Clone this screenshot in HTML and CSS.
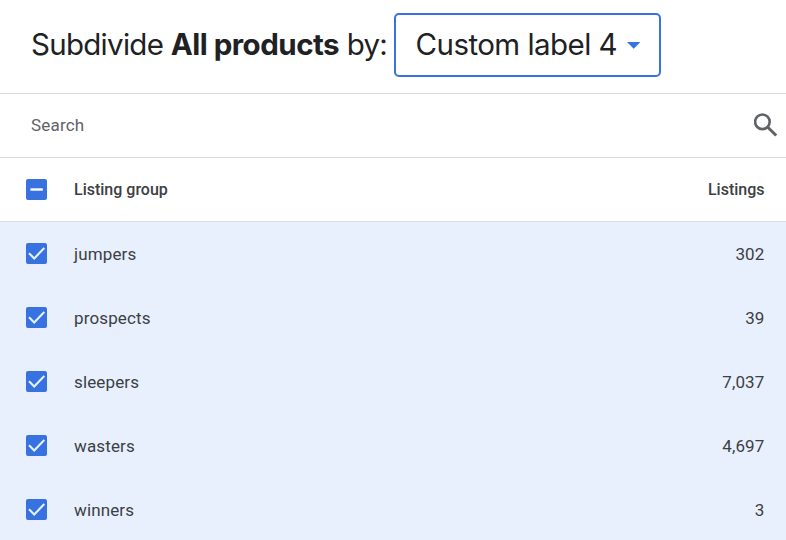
FILE: index.html
```html
<!DOCTYPE html>
<html lang="en">
<head>
  <meta charset="UTF-8">
  <meta name="viewport" content="width=device-width, initial-scale=1.0">
  <title>Subdivide products</title>
  <link rel="stylesheet" href="styles.css">
</head>
<body>
  <div class="header">
    <div class="title">Subdivide <b>All products</b> by:</div>
    <div class="dropdown">
      <span class="dropdown-label">Custom label 4</span>
      <svg class="arrow" width="14" height="7" viewBox="0 0 14 7"><path d="M0 0h13.4L6.7 6.8z" fill="#3871e0"/></svg>
    </div>
  </div>

  <div class="search">
    <span class="search-text">Search</span>
    <svg class="search-icon" width="24" height="24" viewBox="0 0 24 24" fill="none" stroke="#5f6368">
      <circle cx="8.4" cy="8.8" r="7.3" stroke-width="2.6"/>
      <path d="M13.8 14.2l8.4 8.3" stroke-width="3"/>
    </svg>
  </div>

  <div class="row row-head">
    <svg class="checkbox" width="21" height="21" viewBox="0 0 21 21"><rect width="21" height="21" rx="2" fill="#3871e0"/><path d="M4.4 10.5h12.4" stroke="#fff" stroke-width="2.4"/></svg>
    <span class="name">Listing group</span>
    <span class="count">Listings</span>
  </div>

  <div class="row">
    <svg class="checkbox" width="21" height="21" viewBox="0 0 21 21"><rect width="21" height="21" rx="2" fill="#3871e0"/><path d="M3 10.2l5.2 5.2L18.3 5.1" fill="none" stroke="#e8f0fe" stroke-width="2.1"/></svg>
    <span class="name">jumpers</span>
    <span class="count">302</span>
  </div>
  <div class="row">
    <svg class="checkbox" width="21" height="21" viewBox="0 0 21 21"><rect width="21" height="21" rx="2" fill="#3871e0"/><path d="M3 10.2l5.2 5.2L18.3 5.1" fill="none" stroke="#e8f0fe" stroke-width="2.1"/></svg>
    <span class="name">prospects</span>
    <span class="count">39</span>
  </div>
  <div class="row">
    <svg class="checkbox" width="21" height="21" viewBox="0 0 21 21"><rect width="21" height="21" rx="2" fill="#3871e0"/><path d="M3 10.2l5.2 5.2L18.3 5.1" fill="none" stroke="#e8f0fe" stroke-width="2.1"/></svg>
    <span class="name">sleepers</span>
    <span class="count">7,037</span>
  </div>
  <div class="row">
    <svg class="checkbox" width="21" height="21" viewBox="0 0 21 21"><rect width="21" height="21" rx="2" fill="#3871e0"/><path d="M3 10.2l5.2 5.2L18.3 5.1" fill="none" stroke="#e8f0fe" stroke-width="2.1"/></svg>
    <span class="name">wasters</span>
    <span class="count">4,697</span>
  </div>
  <div class="row">
    <svg class="checkbox" width="21" height="21" viewBox="0 0 21 21"><rect width="21" height="21" rx="2" fill="#3871e0"/><path d="M3 10.2l5.2 5.2L18.3 5.1" fill="none" stroke="#e8f0fe" stroke-width="2.1"/></svg>
    <span class="name">winners</span>
    <span class="count">3</span>
  </div>
</body>
</html>
```
FILE: styles.css
```css
* {
  box-sizing: border-box;
}

body {
  margin: 0;
  height: 540px;
  overflow: hidden;
  background: #fff;
  font-family: Roboto, sans-serif;
  font-size: 17px;
  color: #3c4043;
}

/* Header */
.header {
  display: flex;
  align-items: flex-start;
  height: 94px;
  padding: 13px 0 0 31px;
  border-bottom: 1px solid #dadce0;
  font-family: Inter, sans-serif;
  font-size: 29.5px;
  font-weight: 400;
  line-height: 62px;
  letter-spacing: -0.72px;
  color: #202124;
  white-space: nowrap;
}

.title {
  width: 363px;
}

.title b {
  font-weight: 700;
  letter-spacing: -0.5px;
}

.dropdown {
  display: flex;
  align-items: center;
  width: 267px;
  height: 64px;
  padding-left: 19.5px;
  border: 2px solid #3871e0;
  border-radius: 5px;
}

.dropdown-label {
  width: 211.5px;
  padding-bottom: 2px;
  letter-spacing: -0.55px;
}

/* Search */
.search {
  display: flex;
  align-items: center;
  justify-content: space-between;
  height: 64px;
  padding: 0 8px 2px 31px;
  border-bottom: 1px solid #dadce0;
  color: #5f6368;
  letter-spacing: 0.2px;
}

/* List rows */
.row {
  display: flex;
  align-items: center;
  height: 64px;
  padding: 0 21.5px 0 26px;
  background: #e8f0fe;
  letter-spacing: 0.13px;
}

.row .checkbox {
  margin-bottom: 1px;
}

.row-head {
  background: #fff;
  border-bottom: 1px solid #dadce0;
  font-size: 16px;
  font-weight: 500;
  letter-spacing: 0;
}

.row-head .checkbox {
  margin-bottom: 0;
}

.name {
  flex: 1;
  margin-left: 27px;
}
```
